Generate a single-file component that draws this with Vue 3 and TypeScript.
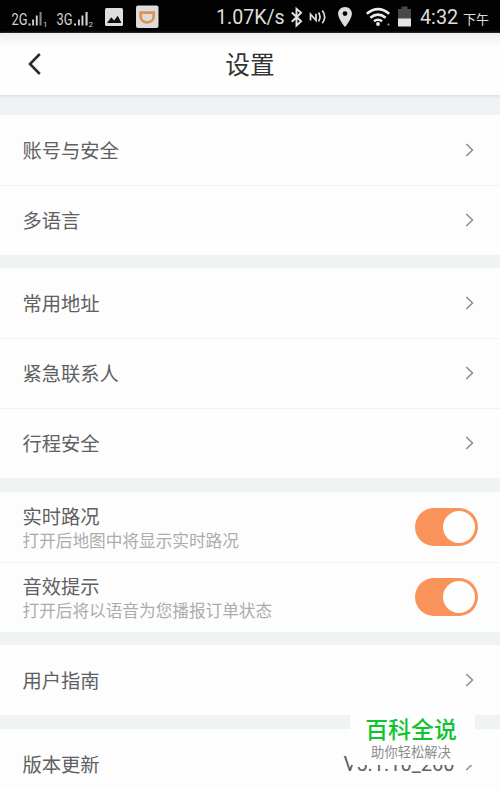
<script setup lang="ts">
import { reactive } from 'vue'

interface Item {
  label: string
  hint?: string
  value?: string
  on?: boolean
}

const groups = reactive<Item[][]>([
  [{ label: '账号与安全' }, { label: '多语言' }],
  [{ label: '常用地址' }, { label: '紧急联系人' }, { label: '行程安全' }],
  [
    { label: '实时路况', hint: '打开后地图中将显示实时路况', on: true },
    { label: '音效提示', hint: '打开后将以语音为您播报订单状态', on: true },
  ],
  [{ label: '用户指南' }],
  [{ label: '版本更新', value: 'V5.1.10_260' }],
])
</script>

<template>
  <div class="screen">
    <div class="status">
      <svg class="status-left" width="170" height="33" viewBox="0 0 170 33">
        <g fill="#d4d4d4" font-size="16">
          <text x="11.5" y="25.3" textLength="16" lengthAdjust="spacingAndGlyphs">2G</text>
          <text x="56.5" y="25.3" textLength="16" lengthAdjust="spacingAndGlyphs">3G</text>
          <path d="M28.500 23.500h2v2h-2zM32.200 19.500h1.800v6h-1.800zM35.800 15.500h1.900v10h-1.900zM74 23.500h2v2h-2zM78 19.500h1.800v6h-1.800zM81.500 15.500h1.900v10h-1.900zM85.500 12h2.100v13.500h-2.100z" />
          <path d="M39.500 12h2.100v13.500h-2.100z" fill="#858585" />
          <text x="43" y="26.500" font-size="8">1</text>
          <text x="88.500" y="26.500" font-size="8">2</text>
        </g>
        <rect x="105" y="8" width="18" height="18" rx="1.500" fill="#dedede" />
        <path d="M107 23l4.300-5.800 2.800 3.200 3.600-4.700 3.800 7.300z" fill="#111" />
        <rect x="136" y="5.500" width="22.500" height="22.500" rx="2" fill="#dedcda" />
        <path d="M140.700 12.700h13v3.500c0 3.600-2.600 6.100-6.500 6.100s-6.500-2.400-6.500-5.800z" fill="none" stroke="#dc9358" stroke-width="2.700" />
      </svg>
      <div class="status-right">
        <span class="speed">1.07K/s</span>
        <svg class="status-icons" width="135" height="33" viewBox="285 0 135 33">
          <path d="M291.800 12.500l9.300 8.800-4.600 4.200V8.800l4.600 4-9.300 9" fill="none" stroke="#e4e4e4" stroke-width="1.900" />
          <path d="M310.500 20.500v-6.200l5.500 6v-6.500M318.500 12.500q3 4.500 0 9M322.300 10.500q4.800 6.500 0 12.700" fill="none" stroke="#dedede" stroke-width="1.700" />
          <path fill-rule="evenodd" d="M345 7c-3.900 0-6.900 2.900-6.900 6.700 0 5 6.900 13.300 6.900 13.300s6.900-8.300 6.900-13.300C351.900 9.900 348.900 7 345 7zm0 4.200a2.400 2.400 0 1 1 0 4.800 2.400 2.400 0 0 1 0-4.800z" fill="#dedede" />
          <g fill="none" stroke="#ececec" stroke-width="2.500">
            <path d="M366.800 13.800q11.200-9.400 22.400 0" />
            <path d="M370.300 17.700q7.700-6.200 15.400 0" />
            <path d="M373.900 21.300q4.100-3.100 8.200 0" />
          </g>
          <circle cx="378" cy="24" r="1.900" fill="#ececec" />
          <circle cx="388.500" cy="24.500" r="1.100" fill="#999" />
          <path d="M398 9h3.500V6.500h6V9h3.500v10h-13z" fill="#484848" />
          <path d="M398 18.500h13v8h-13z" fill="#e2e2e2" />
        </svg>
        <span class="clock">4:32</span>
        <span class="period">下午</span>
      </div>
    </div>

    <header class="header">
      <svg class="back" width="14" height="24" viewBox="0 0 14 24">
        <path d="M12.800 2L3 12l9.800 10" fill="none" stroke="#2c2c2c" stroke-width="2.600" />
      </svg>
      <h1>设置</h1>
    </header>

    <main class="list">
      <section v-for="(group, g) in groups" :key="g" class="group">
        <div v-for="item in group" :key="item.label" class="row">
          <div class="texts">
            <span class="label">{{ item.label }}</span>
            <span v-if="item.hint" class="hint">{{ item.hint }}</span>
          </div>
          <button v-if="item.hint" class="switch" :class="{ on: item.on }" @click="item.on = !item.on">
            <span class="knob"></span>
          </button>
          <template v-else>
            <span v-if="item.value" class="value">{{ item.value }}</span>
            <svg class="chevron" width="9" height="14" viewBox="0 0 9 14">
              <path d="M1.300 1l6.200 6-6.200 6" fill="none" stroke="#8c8c90" stroke-width="1.500" />
            </svg>
          </template>
        </div>
      </section>
    </main>

    <div class="badge">
      <strong>百科全说</strong>
      <span>助你轻松解决</span>
    </div>
  </div>
</template>

<style>
body {
  margin: 0;
}
</style>

<style scoped>
.screen {
  position: relative;
  width: 500px;
  height: 790px;
  overflow: hidden;
  background: #f0f3f4;
  font-family: Roboto, "Noto Sans CJK SC", sans-serif;
}
.status {
  height: 33px;
  background: #020202;
  color: #dedede;
  display: flex;
  justify-content: space-between;
}
.status-right {
  display: flex;
  width: 284px;
  line-height: 35px;
  white-space: nowrap;
}
.speed {
  width: 69px;
  font-size: 19.6px;
}
.status-icons {
  flex: none;
}
.clock {
  width: 43px;
  font-size: 19.8px;
}
.period {
  font-size: 13px;
  line-height: 39px;
}
.header {
  height: 61.5px;
  box-sizing: border-box;
  padding-left: 27px;
  display: grid;
  grid-template-columns: 14px 1fr 41px;
  align-items: center;
  background: linear-gradient(#f1eef1, #fefefe 14px);
  box-shadow: 0 1px 3px #d5dadb;
}
h1 {
  margin: 0;
  padding-top: 4px;
  text-align: center;
  font-size: 24.7px;
  line-height: 36px;
  font-weight: 400;
  color: #333;
}
.list {
  padding-top: 20px;
  display: flex;
  flex-direction: column;
  gap: 13.5px;
}
.group {
  background: #fdfdfd;
}
.row {
  height: 70px;
  box-sizing: border-box;
  padding: 0 22.5px;
  display: flex;
  align-items: center;
}
.row + .row {
  box-shadow: inset 0 1px #f0f1f2;
}
.texts {
  flex: 1;
  padding-top: 4px;
  display: flex;
  flex-direction: column;
}
.label {
  font-size: 19.3px;
  line-height: 26px;
  color: #606062;
}
.hint {
  font-size: 16.65px;
  line-height: 21px;
  color: #acacae;
}
.value {
  font-size: 20px;
  color: #606062;
  margin-right: 10px;
}
.chevron {
  margin-right: 4px;
}
.switch {
  width: 63px;
  height: 38px;
  padding: 3px;
  border: 0;
  border-radius: 19px;
  background: #d5d5d8;
  display: flex;
  align-items: center;
}
.switch.on {
  background: #f9935a;
  justify-content: flex-end;
}
.knob {
  width: 32px;
  height: 32px;
  border-radius: 50%;
  background: #fefefe;
}
.badge {
  position: absolute;
  left: 350px;
  top: 704px;
  width: 125px;
  height: 61px;
  padding: 12px 3px 0 0;
  box-sizing: border-box;
  background: #fefefe;
  display: flex;
  flex-direction: column;
  align-items: center;
}
.badge strong {
  font-size: 22.9px;
  line-height: 30px;
  font-weight: 500;
  color: #0fc52f;
}
.badge span {
  font-size: 13.3px;
  line-height: 14px;
  color: #8c8c8c;
}
</style>
